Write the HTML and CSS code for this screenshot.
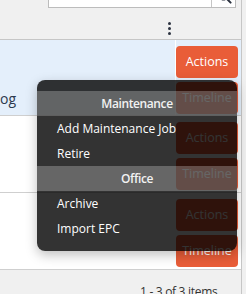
FILE: index.html
```html
<!DOCTYPE html>
<html lang="en">
<head>
  <meta charset="UTF-8">
  <title>Properties</title>
  <link rel="stylesheet" href="styles.css">
</head>
<body>
  <div class="page">
    <div class="grid">
      <!-- toolbar: search + column menu -->
      <div class="toolbar">
        <div class="search-clip">
          <div class="search">
            <div class="search-input"></div>
            <span class="search-btn">
              <svg width="14" height="14" viewBox="0 0 14 14"><circle cx="5.5" cy="5.5" r="4.2" fill="none" stroke="#2b3240" stroke-width="1.6"/><path d="M8.6 8.6 L12.6 12.6" stroke="#2b3240" stroke-width="2" stroke-linecap="round"/></svg>
            </span>
          </div>
        </div>
        <div class="toolbar-tools">
          <span class="kebab"><i></i><i></i><i></i></span>
        </div>
      </div>

      <!-- rows -->
      <div class="row selected">
        <div class="cell cell-main"><span class="cell-text">og</span></div>
        <div class="cell cell-actions">
          <button class="btn">Actions</button>
          <button class="btn">Timeline</button>
        </div>
      </div>
      <div class="row">
        <div class="cell cell-main"></div>
        <div class="cell cell-actions">
          <button class="btn">Actions</button>
          <button class="btn">Timeline</button>
        </div>
      </div>
      <div class="row">
        <div class="cell cell-main"></div>
        <div class="cell cell-actions">
          <button class="btn">Actions</button>
          <button class="btn">Timeline</button>
        </div>
      </div>

      <div class="pager">
        <span class="pager-info">1 - 3 of 3 items</span>
      </div>
    </div>

    <!-- actions popup -->
    <div class="menu">
      <div class="menu-header">Maintenance</div>
      <div class="menu-item">Add Maintenance Job</div>
      <div class="menu-item">Retire</div>
      <div class="menu-header">Office</div>
      <div class="menu-item">Archive</div>
      <div class="menu-item">Import EPC</div>
    </div>
  </div>
</body>
</html>
```
FILE: styles.css
```css
/* reset */
html, body {
  margin: 0;
  padding: 0;
  height: 100%;
  background-color: #f0f0f0;
  font-family: 'Open Sans', 'Liberation Sans', sans-serif;
  font-size: 12px;
  color: #2c3440;
  box-sizing: border-box;
}
*, *::before, *::after {
  box-sizing: inherit;
}
.page {
  position: relative;
  height: 294px;
  overflow: hidden;
}
.grid {
  width: 242px;
  height: 100%;
  border-right: 1px solid #c6c6c6;
  display: flex;
  flex-direction: column;
}
/* toolbar */
.toolbar {
  flex-shrink: 0;
  height: 40px;
  background-color: #f0f0f0;
  border-bottom: 1px solid #c6c6c6;
}
.search-clip {
  height: 8px;
  overflow: hidden;
  display: flex;
  align-items: flex-end;
  padding-left: 48px;
}
.search {
  display: flex;
  flex-shrink: 0;
  width: 188px;
  height: 30px;
  border: 1px solid #bcbcbc;
  background-color: #fff;
}
.search-input {
  flex: 1;
  border-right: 1px solid #c6c6c6;
}
.search-btn {
  width: 23px;
  display: flex;
  justify-content: center;
  align-items: flex-end;
  padding: 0 0 3px 3px;
}
.toolbar-tools {
  display: flex;
  padding: 14px 0 0 168px;
}
.kebab {
  display: flex;
  flex-direction: column;
  gap: 2px;
}
.kebab i {
  display: block;
  width: 3px;
  height: 3px;
  border-radius: 50%;
  background-color: #2b3240;
}
/* rows */
.row {
  flex-shrink: 0;
  display: flex;
  height: 77px;
  border-bottom: 1px solid #cfcfcf;
  background-color: #fff;
}
.row.selected {
  height: 76px;
  background-color: #e4effb;
}
.cell-main {
  flex: 1;
  padding-top: 49px;
  font-size: 14px;
  line-height: 20px;
  color: #2c3a4e;
}
.cell-actions {
  width: 66px;
  border-left: 1px solid #fff;
  padding-top: 6px;
  display: flex;
  flex-direction: column;
  gap: 4px;
}
.btn {
  width: 62px;
  height: 32px;
  padding: 0;
  border: none;
  border-radius: 4px;
  background-color: #e95d38;
  color: #fff;
  font-family: inherit;
  font-size: 12.5px;
  line-height: 32px;
  cursor: pointer;
}
/* pager */
.pager {
  flex: 1;
  min-height: 0;
  background-color: #f0f0f0;
  padding: 12px 0 0 140px;
  line-height: 20px;
  letter-spacing: -0.3px;
  color: #333;
}
/* popup menu */
.menu {
  position: absolute;
  left: 37px;
  top: 80px;
  width: 200px;
  height: 171px;
  padding: 11px 0 10px;
  border-radius: 8px;
  background-color: rgba(0, 0, 0, 0.8);
  box-shadow: 0 4px 12px rgba(0, 0, 0, 0.25);
  color: #fff;
}
.menu-header {
  height: 25px;
  line-height: 25px;
  text-align: center;
  font-weight: 600;
  letter-spacing: -0.4px;
  color: #f2f2f2;
  background-color: rgba(255, 255, 255, 0.25);
}
.menu-item {
  height: 25px;
  line-height: 25px;
  padding-left: 20px;
}
```
